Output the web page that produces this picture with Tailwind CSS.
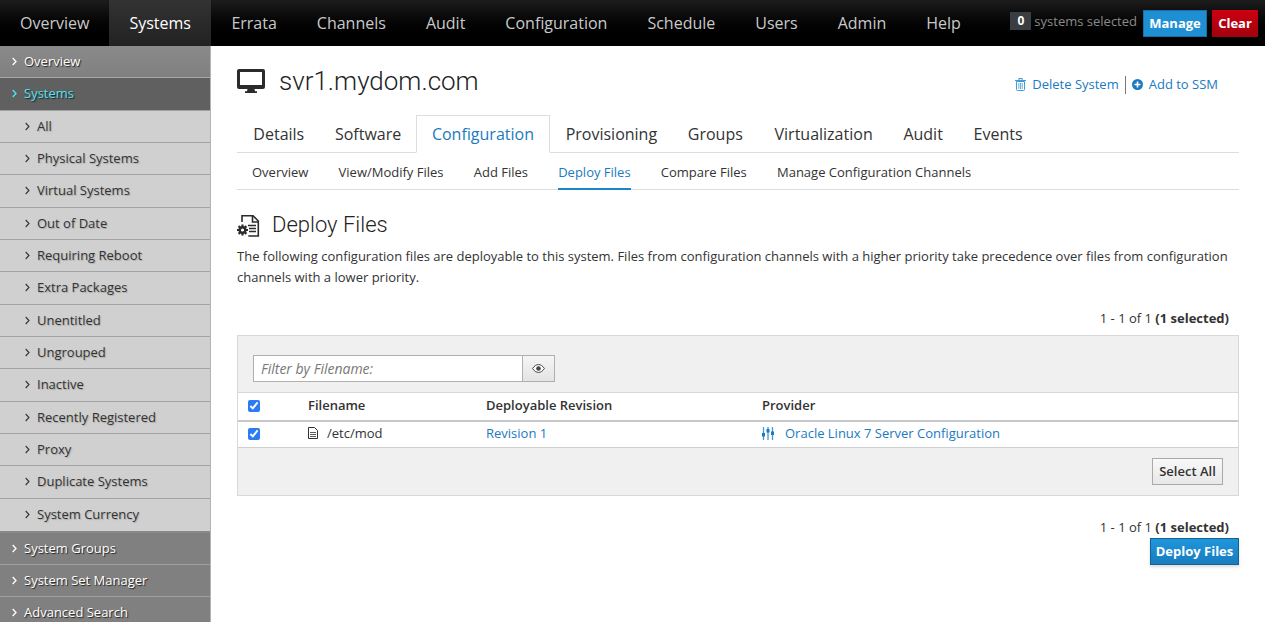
<!DOCTYPE html>
<html lang="en">
<head>
    <meta charset="UTF-8">
    <title>System Details - Deploy Files</title>
    <script src="https://cdn.jsdelivr.net/npm/@tailwindcss/browser@4"></script>
</head>
<body class="h-[622px] overflow-hidden bg-white font-['Open_Sans',sans-serif] text-[13px] text-[#333]">
    <!-- top navigation -->
    <header class="h-[46px] flex justify-between bg-gradient-to-b from-[#1c1c1c] to-[#000] text-[16px] text-[#c9c9c9]">
        <nav class="flex">
            <a class="px-5 leading-[46px]">Overview</a>
            <a class="px-5 leading-[46px] w-[102px] bg-gradient-to-b from-[#333] to-[#222] text-white">Systems</a>
            <a class="px-5 leading-[46px]">Errata</a>
            <a class="px-5 leading-[46px]">Channels</a>
            <a class="px-5 leading-[46px]">Audit</a>
            <a class="px-5 leading-[46px]">Configuration</a>
            <a class="px-5 leading-[46px]">Schedule</a>
            <a class="px-5 leading-[46px]">Users</a>
            <a class="px-5 leading-[46px]">Admin</a>
            <a class="px-5 leading-[46px]">Help</a>
        </nav>
        <div class="flex items-start pt-[10px] pr-[7px] text-[13px]">
            <span class="w-[21px] h-[18px] mt-[2px] bg-[#3a3d42] text-white font-bold text-center text-[12px] leading-[18px]">0</span>
            <span class="ml-[3px] mr-[6px] text-[#8a8a8a] leading-[22px]">systems selected</span>
            <button class="w-[64px] h-[27px] bg-[#1f8fd3] border border-[#1a6ea5] text-white font-bold text-[13px]">Manage</button>
            <button class="w-[46px] h-[27px] ml-[5px] bg-gradient-to-b from-[#cc0011] to-[#a3000d] text-white font-bold text-[13px]">Clear</button>
        </div>
    </header>

    <div class="flex h-[576px]">
        <!-- sidebar -->
        <aside class="w-[211px] shrink-0 overflow-hidden bg-[#d0d0d0] border-r border-[#b4b4b4]">
            <a class="flex items-center h-[32.33px] pl-[12px] gap-[7px] bg-gradient-to-b from-[#8a8a8a] to-[#808080] border-b border-[#a8a8a8] text-white [text-shadow:1px_1px_1px_#222]"><svg class="w-[5px] h-[9px]" viewBox="0 0 5 9"><path d="M.7 1l3.300 3.500L.7 8" fill="none" stroke="#fff" stroke-width="1.300"/></svg>Overview</a>
            <a class="flex items-center h-[32.33px] pl-[12px] gap-[7px] bg-[#606060] border-b border-[#a0a0a0] text-[#4fe3f5] [text-shadow:1px_1px_1px_#222]"><svg class="w-[5px] h-[9px]" viewBox="0 0 5 9"><path d="M.7 1l3.300 3.500L.7 8" fill="none" stroke="#4fe3f5" stroke-width="1.300"/></svg>Systems</a>
            <a class="flex items-center h-[32.33px] pl-[25px] gap-[7px] border-b border-[#a3a3a3] [text-shadow:1px_1px_1px_#aaa]"><svg class="w-[5px] h-[9px]" viewBox="0 0 5 9"><path d="M.7 1l3.300 3.500L.7 8" fill="none" stroke="#333" stroke-width="1.100"/></svg>All</a>
            <a class="flex items-center h-[32.33px] pl-[25px] gap-[7px] border-b border-[#a3a3a3] [text-shadow:1px_1px_1px_#aaa]"><svg class="w-[5px] h-[9px]" viewBox="0 0 5 9"><path d="M.7 1l3.300 3.500L.7 8" fill="none" stroke="#333" stroke-width="1.100"/></svg>Physical Systems</a>
            <a class="flex items-center h-[32.33px] pl-[25px] gap-[7px] border-b border-[#a3a3a3] [text-shadow:1px_1px_1px_#aaa]"><svg class="w-[5px] h-[9px]" viewBox="0 0 5 9"><path d="M.7 1l3.300 3.500L.7 8" fill="none" stroke="#333" stroke-width="1.100"/></svg>Virtual Systems</a>
            <a class="flex items-center h-[32.33px] pl-[25px] gap-[7px] border-b border-[#a3a3a3] [text-shadow:1px_1px_1px_#aaa]"><svg class="w-[5px] h-[9px]" viewBox="0 0 5 9"><path d="M.7 1l3.300 3.500L.7 8" fill="none" stroke="#333" stroke-width="1.100"/></svg>Out of Date</a>
            <a class="flex items-center h-[32.33px] pl-[25px] gap-[7px] border-b border-[#a3a3a3] [text-shadow:1px_1px_1px_#aaa]"><svg class="w-[5px] h-[9px]" viewBox="0 0 5 9"><path d="M.7 1l3.300 3.500L.7 8" fill="none" stroke="#333" stroke-width="1.100"/></svg>Requiring Reboot</a>
            <a class="flex items-center h-[32.33px] pl-[25px] gap-[7px] border-b border-[#a3a3a3] [text-shadow:1px_1px_1px_#aaa]"><svg class="w-[5px] h-[9px]" viewBox="0 0 5 9"><path d="M.7 1l3.300 3.500L.7 8" fill="none" stroke="#333" stroke-width="1.100"/></svg>Extra Packages</a>
            <a class="flex items-center h-[32.33px] pl-[25px] gap-[7px] border-b border-[#a3a3a3] [text-shadow:1px_1px_1px_#aaa]"><svg class="w-[5px] h-[9px]" viewBox="0 0 5 9"><path d="M.7 1l3.300 3.500L.7 8" fill="none" stroke="#333" stroke-width="1.100"/></svg>Unentitled</a>
            <a class="flex items-center h-[32.33px] pl-[25px] gap-[7px] border-b border-[#a3a3a3] [text-shadow:1px_1px_1px_#aaa]"><svg class="w-[5px] h-[9px]" viewBox="0 0 5 9"><path d="M.7 1l3.300 3.500L.7 8" fill="none" stroke="#333" stroke-width="1.100"/></svg>Ungrouped</a>
            <a class="flex items-center h-[32.33px] pl-[25px] gap-[7px] border-b border-[#a3a3a3] [text-shadow:1px_1px_1px_#aaa]"><svg class="w-[5px] h-[9px]" viewBox="0 0 5 9"><path d="M.7 1l3.300 3.500L.7 8" fill="none" stroke="#333" stroke-width="1.100"/></svg>Inactive</a>
            <a class="flex items-center h-[32.33px] pl-[25px] gap-[7px] border-b border-[#a3a3a3] [text-shadow:1px_1px_1px_#aaa]"><svg class="w-[5px] h-[9px]" viewBox="0 0 5 9"><path d="M.7 1l3.300 3.500L.7 8" fill="none" stroke="#333" stroke-width="1.100"/></svg>Recently Registered</a>
            <a class="flex items-center h-[32.33px] pl-[25px] gap-[7px] border-b border-[#a3a3a3] [text-shadow:1px_1px_1px_#aaa]"><svg class="w-[5px] h-[9px]" viewBox="0 0 5 9"><path d="M.7 1l3.300 3.500L.7 8" fill="none" stroke="#333" stroke-width="1.100"/></svg>Proxy</a>
            <a class="flex items-center h-[32.33px] pl-[25px] gap-[7px] border-b border-[#a3a3a3] [text-shadow:1px_1px_1px_#aaa]"><svg class="w-[5px] h-[9px]" viewBox="0 0 5 9"><path d="M.7 1l3.300 3.500L.7 8" fill="none" stroke="#333" stroke-width="1.100"/></svg>Duplicate Systems</a>
            <a class="flex items-center h-[34px] pl-[25px] gap-[7px] border-b-2 border-[#8a8a8a] [text-shadow:1px_1px_1px_#aaa]"><svg class="w-[5px] h-[9px]" viewBox="0 0 5 9"><path d="M.7 1l3.300 3.500L.7 8" fill="none" stroke="#333" stroke-width="1.100"/></svg>System Currency</a>
            <a class="flex items-center h-[32.33px] pl-[12px] gap-[7px] bg-[#808080] border-b border-[#a0a0a0] text-white [text-shadow:1px_1px_1px_#222]"><svg class="w-[5px] h-[9px]" viewBox="0 0 5 9"><path d="M.7 1l3.300 3.500L.7 8" fill="none" stroke="#fff" stroke-width="1.300"/></svg>System Groups</a>
            <a class="flex items-center h-[32.33px] pl-[12px] gap-[7px] bg-[#808080] border-b border-[#a0a0a0] text-white [text-shadow:1px_1px_1px_#222]"><svg class="w-[5px] h-[9px]" viewBox="0 0 5 9"><path d="M.7 1l3.300 3.500L.7 8" fill="none" stroke="#fff" stroke-width="1.300"/></svg>System Set Manager</a>
            <a class="flex items-center h-[32.33px] pl-[12px] gap-[7px] bg-[#808080] border-b border-[#a0a0a0] text-white [text-shadow:1px_1px_1px_#222]"><svg class="w-[5px] h-[9px]" viewBox="0 0 5 9"><path d="M.7 1l3.300 3.500L.7 8" fill="none" stroke="#fff" stroke-width="1.300"/></svg>Advanced Search</a>
        </aside>

        <!-- main content -->
        <main class="flex-1 pl-[26px] pr-[26px]">
            <div class="flex justify-between items-start pt-[19px] h-[69px]">
                <h1 class="flex items-center gap-[14px] font-['Roboto',sans-serif] font-light text-[26px] leading-[32px] text-[#222]">
                    <svg class="w-[28px] h-[24px]" viewBox="0 0 28 24"><path fill-rule="evenodd" d="M2 0h24a2 2 0 0 1 2 2v16a2 2 0 0 1-2 2H2a2 2 0 0 1-2-2V2a2 2 0 0 1 2-2zM3 3v13h22V3z" fill="#2b2b2b"/><path d="M10.500 20h7l.5 2.300h2V24H8v-1.700h2z" fill="#2b2b2b"/></svg>
                    svr1.mydom.com
                </h1>
                <div class="flex items-center mt-[10px] pr-[21px] text-[#1b7ac0]">
                    <svg class="w-[11px] h-[13px] mr-[6px]" viewBox="0 0 11 13"><path d="M1.500 3.500v8a1 1 0 0 0 1 1h6a1 1 0 0 0 1-1v-8z" fill="none" stroke="#3f9ad6"/><path d="M0 2h11v1H0zM3.500 0h4v2h-1V1h-2v1h-1z" fill="#3f9ad6"/><path d="M3.800 5v6M5.500 5v6M7.200 5v6" stroke="#3f9ad6" stroke-width=".8"/></svg>
                    <a>Delete System</a>
                    <span class="w-px h-[18px] bg-[#777] ml-[6px] mr-[6px]"></span>
                    <svg class="w-[11px] h-[11px] mr-[6px]" viewBox="0 0 11 11"><circle cx="5.500" cy="5.500" r="5.500" fill="#1b7ac0"/><path d="M5.500 2.500v6M2.500 5.500h6" stroke="#fff" stroke-width="1.600"/></svg>
                    <a>Add to SSM</a>
                </div>
            </div>

            <!-- tabs -->
            <div class="flex h-[38px] pl-px border-b border-[#ddd] text-[16px] text-[#333]">
                <a class="px-[15.35px] leading-[38px]">Details</a>
                <a class="px-[15.35px] leading-[38px]">Software</a>
                <a class="-ml-px px-[15.35px] h-[38px] leading-[36px] bg-white border border-[#ddd] border-b-white text-[#1b7ac0]">Configuration</a>
                <a class="px-[15.35px] leading-[38px]">Provisioning</a>
                <a class="px-[15.35px] leading-[38px]">Groups</a>
                <a class="ml-px px-[15.35px] leading-[38px]">Virtualization</a>
                <a class="px-[15.35px] leading-[38px]">Audit</a>
                <a class="px-[15.35px] leading-[38px]">Events</a>
            </div>
            <div class="flex h-[37px] border-b border-[#ddd] pl-[15px] gap-[30.2px] leading-[38px]">
                <a>Overview</a>
                <a>View/Modify Files</a>
                <a>Add Files</a>
                <a class="text-[#1b7ac0] border-b-2 border-[#1b85c8] h-[37px]">Deploy Files</a>
                <a>Compare Files</a>
                <a>Manage Configuration Channels</a>
            </div>

            <h2 class="flex items-center gap-[8px] mt-[19px] font-['Roboto',sans-serif] font-light text-[22px] leading-[32px] text-[#222]">
                <svg class="w-[27px] h-[25px]" viewBox="0 0 27 25"><path d="M5 9V2.700h11l5.300 5.300v15h-10" fill="none" stroke="#2b2b2b" stroke-width="1.600"/><path d="M15.500 3v6h5.500" fill="none" stroke="#2b2b2b" stroke-width="1.600"/><path d="M11 12.500h8M12 15.500h7M12 18.500h7" stroke="#2b2b2b" stroke-width="1.300"/><circle cx="5.500" cy="17" r="2.800" fill="none" stroke="#2b2b2b" stroke-width="2.400"/><path d="M5.500 11.500v2M5.500 20.500v2M0 17h2M9 17h2M1.600 13.100l1.400 1.400M8 19.500l1.400 1.400M1.600 20.900L3 19.500M8 14.500l1.400-1.400" stroke="#2b2b2b" stroke-width="2.200"/></svg>
                Deploy Files
            </h2>
            <p class="mt-[5px] leading-[21px]">The following configuration files are deployable to this system. Files from configuration channels with a higher priority take precedence over files from configuration channels with a lower priority.</p>

            <div class="mt-[20px] pr-[10px] text-right leading-[21px]"><span>1 - 1 of 1</span> <b>(1 selected)</b></div>

            <!-- file list -->
            <div class="mt-[6px] bg-[#f0f0f0] border border-[#d8d8d8]">
                <div class="flex h-[56px] pt-[19px] pl-[15px]">
                    <input class="w-[270px] h-[27px] px-[7px] bg-white border border-[#b0b0b0] italic text-[14px] placeholder:text-[#777]" placeholder="Filter by Filename:">
                    <button class="w-[32px] h-[27px] flex items-center justify-center border border-l-0 border-[#b0b0b0] bg-gradient-to-b from-[#f5f5f5] to-[#e4e4e4]">
                        <svg class="w-[13px] h-[9px]" viewBox="0 0 13 9"><path d="M.6 4.500C2.400 1.800 4.200.6 6.500.6s4.100 1.200 5.900 3.900C10.600 7.200 8.800 8.400 6.500 8.400S2.400 7.200.6 4.500z" fill="#fff" stroke="#444"/><circle cx="6.500" cy="4.500" r="2.300" fill="#444"/></svg>
                    </button>
                </div>
                <table class="w-full bg-white border-collapse">
                    <thead>
                        <tr class="h-[28px] border-t border-[#d8d8d8] border-b-2 border-b-[#c8c8c8] text-left">
                            <th class="w-[70px] pl-[10px] pb-[2px] font-normal leading-none"><input type="checkbox" checked class="w-3 h-3 m-0 align-middle accent-[#2b7bf5]"></th>
                            <th class="w-[178px] pb-[2px] font-semibold">Filename</th>
                            <th class="w-[276px] pb-[2px] font-semibold">Deployable Revision</th>
                            <th class="pb-[2px] font-semibold">Provider</th>
                        </tr>
                    </thead>
                    <tbody>
                        <tr class="h-[27px] border-b border-[#d0d0d0]">
                            <td class="pl-[10px] pb-[2px] leading-none"><input type="checkbox" checked class="w-3 h-3 m-0 align-middle accent-[#2b7bf5]"></td>
                            <td class="pb-[2px]">
                                <span class="flex items-center gap-[9px]">
                                    <svg class="w-[10px] h-[12px]" viewBox="0 0 10 12"><path d="M.5.500h6l3 3v8h-9z" fill="none" stroke="#333"/><path d="M2 5.500h6M2 7.500h6M2 9.500h6" stroke="#333" stroke-width=".8"/></svg>
                                    /etc/mod
                                </span>
                            </td>
                            <td class="pb-[2px] text-[#1b7ac0]">Revision 1</td>
                            <td class="pb-[2px] text-[#1b7ac0]">
                                <span class="flex items-center gap-[11px]">
                                    <svg class="w-[12px] h-[13px]" viewBox="0 0 12 13"><path d="M1.500 0v13M6 0v13M10.500 0v13" stroke="#3f9ad6" stroke-width="1.300"/><rect x="0" y="6" width="3" height="3.500" fill="#1b7ac0"/><rect x="4.500" y="2" width="3" height="3.500" fill="#1b7ac0"/><rect x="9" y="4.500" width="3" height="3.500" fill="#1b7ac0"/></svg>
                                    Oracle Linux 7 Server Configuration
                                </span>
                            </td>
                        </tr>
                    </tbody>
                </table>
                <div class="flex justify-end h-[47px] pt-[10px] pr-[15px]">
                    <button class="w-[71px] h-[27px] bg-gradient-to-b from-[#f8f8f8] to-[#e8e8e8] border border-[#aaa] font-semibold text-[13px] text-[#333]">Select All</button>
                </div>
            </div>

            <div class="mt-[21px] pr-[10px] text-right leading-[21px]"><span>1 - 1 of 1</span> <b>(1 selected)</b></div>
            <div class="flex justify-end">
                <button class="w-[89px] h-[27px] bg-gradient-to-b from-[#1f96db] to-[#187cc0] border border-[#17608f] text-white font-bold text-[13px] shadow-[0_2px_3px_rgba(0,0,0,0.15)]">Deploy Files</button>
            </div>
        </main>
    </div>
</body>
</html>
